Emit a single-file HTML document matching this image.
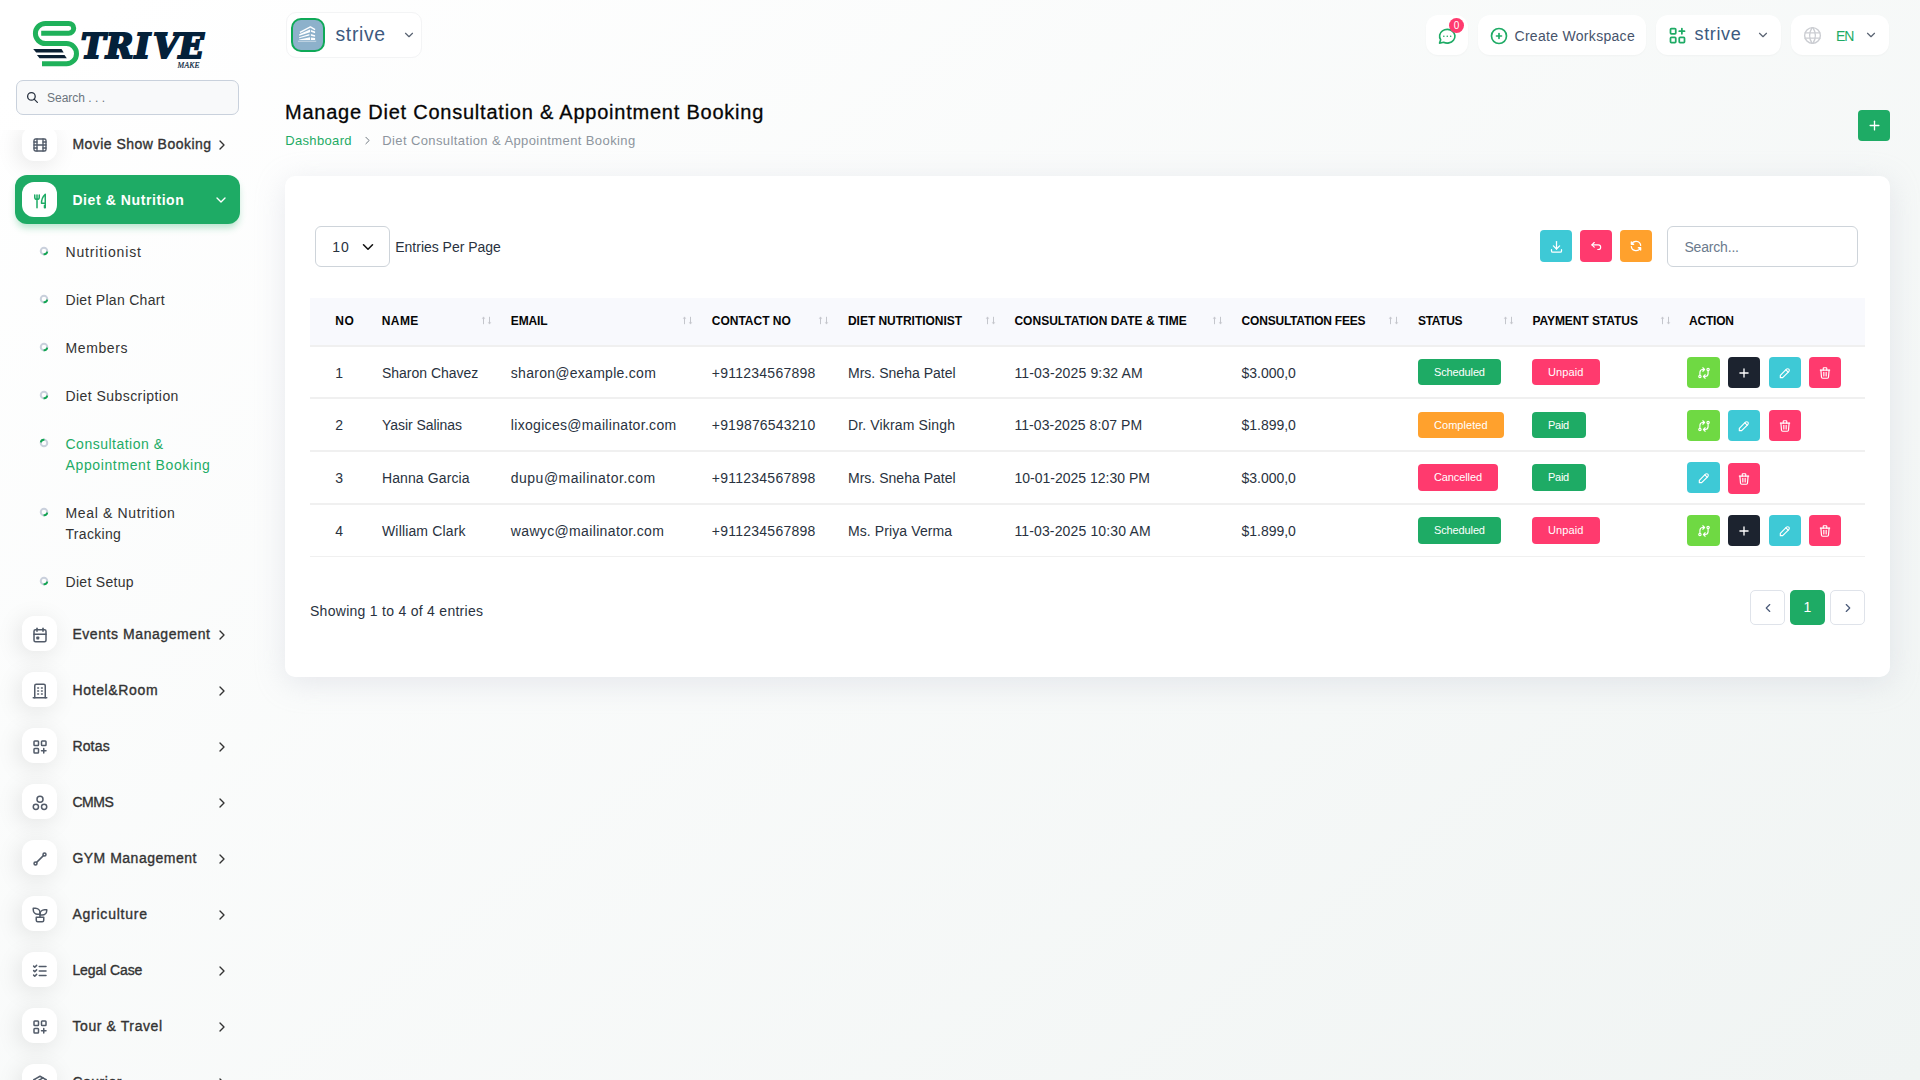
<!DOCTYPE html>
<html lang="en"><head><meta charset="utf-8"><title>Manage Diet Consultation &amp; Appointment Booking</title>
<style>
*{box-sizing:border-box;margin:0;padding:0}
html,body{width:1920px;height:1080px;overflow:hidden}
body{font-family:"Liberation Sans","DejaVu Sans",sans-serif;font-size:14px;color:#293240;
 background:linear-gradient(141.55deg,rgba(240,244,243,0) 3.46%,#f0f4f3 99.86%),#fff;position:relative}
.abs{position:absolute}
.tx{white-space:nowrap;display:inline-block}
svg.ti{display:block}
.micon svg{transform:translateY(1px)}
/* sidebar */
.sb-scroll{position:absolute;left:0;top:130px;width:280px;height:950px;overflow:hidden}
.micon{position:absolute;left:22px;width:35px;height:35px;border-radius:12px;background:#fff;box-shadow:-3px 4px 23px rgba(0,0,0,.1);display:flex;align-items:center;justify-content:center;color:#525b69}
.mtext{position:absolute;left:72.4px;font-size:14px;line-height:20px;color:#333;font-weight:400;-webkit-text-stroke:.35px #333}
.marrow{position:absolute;left:215px;color:#333}
.sub{position:absolute;left:65.5px;font-size:14px;line-height:21px;color:#333}
.sub.act{color:#1eab65}
.bul{position:absolute;left:39.05px}
.active-bg{position:absolute;left:15px;top:45px;width:225px;height:49px;border-radius:12px;background:#1eab65;box-shadow:0 5px 7px -1px rgba(30,171,101,.3)}
/* header */
.pill{position:absolute;background:#fff;border-radius:12px;top:15px;height:40px;box-shadow:0 1px 2px rgba(0,0,0,.03)}
/* card */
.card{position:absolute;left:285px;top:176px;width:1605px;height:501px;background:#fff;border-radius:10px;box-shadow:0 6px 30px rgba(182,186,203,.3)}
.btn{position:absolute;border-radius:4px;display:flex;align-items:center;justify-content:center;color:#fff}
.th{position:absolute;top:-1px;height:48px;line-height:48px;font-size:12px;font-weight:700;color:#060606}
.td{position:absolute;font-size:14px;line-height:20px;color:#293240}
.sort{position:absolute;top:18px}
.badge{position:absolute;height:26px;border-radius:4px;color:#fff;font-size:11px;line-height:27.4px;padding-left:16px}
.rowline{position:absolute;left:0;width:1555px;height:2px;background:#f0f0f0}
</style></head><body>
<svg class="abs" style="left:28px;top:16px" width="190" height="58" viewBox="28 16 190 58" role="img" aria-label="STRIVE MAKE"><title>STRIVE MAKE</title>
<path d="M41.200 33.300H68.750A4.950 4.950 0 0 0 68.750 23.400H45.500A10.100 10.100 0 0 0 45.500 43.600H66.450A10.050 10.050 0 0 1 66.450 63.700H42" fill="none" stroke="#1fb15a" stroke-width="5" stroke-linejoin="round"/>
<path d="M33.200 49h28.300l2.200 3.600h-27.500z" fill="#0b2034"/>
<path d="M36.900 55.100h27.600l2.300 3.100h-27.200z" fill="#0b2034"/>
<text x="80.900 106.100 134.700 153.300 178.700" y="57.600" font-family="'DejaVu Serif','Liberation Serif',serif" font-weight="700" font-style="italic" font-size="32.800" fill="#04213a" stroke="#04213a" stroke-width="2.200">TRIVE</text>
<text x="177.600" y="67.700" font-family="'Liberation Serif',serif" font-weight="400" font-style="italic" font-size="7.800" fill="#04213a" stroke="#04213a" stroke-width=".15" textLength="21.800" lengthAdjust="spacingAndGlyphs">MAKE</text>
</svg>
<div class="abs" style="left:16px;top:80px;width:223px;height:35px;border:1px solid #c9d1dc;border-radius:7px;background:#f8f9fa"></div>
<div class="abs" style="left:26px;top:91px;color:#293240"><svg class="ti" width="13" height="13" viewBox="0 0 24 24" fill="none" stroke="currentColor" stroke-width="2.4" stroke-linecap="round" stroke-linejoin="round" ><circle cx="10" cy="10" r="7"/><path d="M21 21l-6 -6"/></svg></div>
<div class="abs" style="left:47px;top:87.500px;font-size:12px;line-height:20px;color:#6c757d"><span id="t1" class="tx " style="letter-spacing:-0.003px;">Search . . .</span></div>
<nav class="sb-scroll" aria-label="Main menu"><div class="micon" style="top:-4px"><svg class="ti" width="18" height="18" viewBox="0 0 24 24" fill="none" stroke="currentColor" stroke-width="1.8" stroke-linecap="round" stroke-linejoin="round" ><path d="M4 6a2 2 0 0 1 2 -2h12a2 2 0 0 1 2 2v12a2 2 0 0 1 -2 2h-12a2 2 0 0 1 -2 -2z"/><path d="M8 4v16"/><path d="M16 4v16"/><path d="M4 8h4"/><path d="M4 16h4"/><path d="M4 12h16"/><path d="M16 8h4"/><path d="M16 16h4"/></svg></div><div class="mtext" style="top:3.5px"><span id="t2" class="tx " style="letter-spacing:0.462px;">Movie Show Booking</span></div><div class="marrow" style="top:6.5px;left:214px"><svg class="ti" width="16" height="16" viewBox="0 0 24 24" fill="none" stroke="currentColor" stroke-width="2" stroke-linecap="round" stroke-linejoin="round" ><path d="M9 6l6 6l-6 6"/></svg></div><div class="active-bg" style="top:45px"></div><div class="micon" style="top:52px;color:#1eab65;box-shadow:none"><svg class="ti" width="18" height="18" viewBox="0 0 24 24" fill="none" stroke="currentColor" stroke-width="2" stroke-linecap="round" stroke-linejoin="round" ><path d="M19 3v12h-5c-.023 -3.681 .184 -7.406 5 -12zm0 12v6h-1v-3m-10 -14v17m-3 -17v3a3 3 0 1 0 6 0v-3"/></svg></div><div class="mtext" style="top:59.5px;color:#fff;font-weight:700;-webkit-text-stroke:0"><span id="t3" class="tx " style="letter-spacing:0.583px;">Diet &amp; Nutrition</span></div><div class="marrow" style="top:61.5px;left:212.500px;color:#fff"><svg class="ti" width="16" height="16" viewBox="0 0 24 24" fill="none" stroke="currentColor" stroke-width="2" stroke-linecap="round" stroke-linejoin="round" ><path d="M6 9l6 6l6 -6"/></svg></div><svg class="bul" style="top:115.90px" width="10" height="10" viewBox="0 0 10 10"><g transform="rotate(0 5 5)" fill="none" stroke-width="2"><circle cx="5" cy="5" r="3.250" stroke="#c9d0dc"/><path d="M8.200 5.600A3.250 3.250 0 0 1 4.600 8.230" stroke="#12a552"/></g></svg><div class="sub" style="top:111.5px"><span id="t4" class="tx " style="letter-spacing:0.842px;">Nutritionist</span></div><svg class="bul" style="top:163.90px" width="10" height="10" viewBox="0 0 10 10"><g transform="rotate(0 5 5)" fill="none" stroke-width="2"><circle cx="5" cy="5" r="3.250" stroke="#c9d0dc"/><path d="M8.200 5.600A3.250 3.250 0 0 1 4.600 8.230" stroke="#12a552"/></g></svg><div class="sub" style="top:159.5px"><span id="t5" class="tx " style="letter-spacing:0.297px;">Diet Plan Chart</span></div><svg class="bul" style="top:211.90px" width="10" height="10" viewBox="0 0 10 10"><g transform="rotate(0 5 5)" fill="none" stroke-width="2"><circle cx="5" cy="5" r="3.250" stroke="#c9d0dc"/><path d="M8.200 5.600A3.250 3.250 0 0 1 4.600 8.230" stroke="#12a552"/></g></svg><div class="sub" style="top:207.5px"><span id="t6" class="tx " style="letter-spacing:0.590px;">Members</span></div><svg class="bul" style="top:259.90px" width="10" height="10" viewBox="0 0 10 10"><g transform="rotate(0 5 5)" fill="none" stroke-width="2"><circle cx="5" cy="5" r="3.250" stroke="#c9d0dc"/><path d="M8.200 5.600A3.250 3.250 0 0 1 4.600 8.230" stroke="#12a552"/></g></svg><div class="sub" style="top:255.5px"><span id="t7" class="tx " style="letter-spacing:0.442px;">Diet Subscription</span></div><svg class="bul" style="top:307.90px" width="10" height="10" viewBox="0 0 10 10"><g transform="rotate(180 5 5)" fill="none" stroke-width="2"><circle cx="5" cy="5" r="3.250" stroke="#c9d0dc"/><path d="M8.200 5.600A3.250 3.250 0 0 1 4.600 8.230" stroke="#12a552"/></g></svg><div class="sub act" style="top:303.5px"><span id="t8" class="tx " style="letter-spacing:0.495px;">Consultation &amp;</span></div><div class="sub act" style="top:324.5px"><span id="t9" class="tx " style="letter-spacing:0.628px;">Appointment Booking</span></div><svg class="bul" style="top:376.90px" width="10" height="10" viewBox="0 0 10 10"><g transform="rotate(0 5 5)" fill="none" stroke-width="2"><circle cx="5" cy="5" r="3.250" stroke="#c9d0dc"/><path d="M8.200 5.600A3.250 3.250 0 0 1 4.600 8.230" stroke="#12a552"/></g></svg><div class="sub" style="top:372.5px"><span id="t10" class="tx " style="letter-spacing:0.654px;">Meal &amp; Nutrition</span></div><div class="sub" style="top:393.5px"><span id="t11" class="tx " style="letter-spacing:0.318px;">Tracking</span></div><svg class="bul" style="top:445.90px" width="10" height="10" viewBox="0 0 10 10"><g transform="rotate(0 5 5)" fill="none" stroke-width="2"><circle cx="5" cy="5" r="3.250" stroke="#c9d0dc"/><path d="M8.200 5.600A3.250 3.250 0 0 1 4.600 8.230" stroke="#12a552"/></g></svg><div class="sub" style="top:441.5px"><span id="t12" class="tx " style="letter-spacing:0.303px;">Diet Setup</span></div><div class="micon" style="top:486px"><svg class="ti" width="18" height="18" viewBox="0 0 24 24" fill="none" stroke="currentColor" stroke-width="2" stroke-linecap="round" stroke-linejoin="round" ><path d="M4 7a2 2 0 0 1 2 -2h12a2 2 0 0 1 2 2v12a2 2 0 0 1 -2 2h-12a2 2 0 0 1 -2 -2z"/><path d="M16 3v4"/><path d="M8 3v4"/><path d="M4 11h16"/><path d="M8 15h2v2h-2z"/></svg></div><div class="mtext" style="top:493.5px"><span id="t13" class="tx " style="letter-spacing:0.568px;">Events Management</span></div><div class="marrow" style="top:496.5px;left:214px"><svg class="ti" width="16" height="16" viewBox="0 0 24 24" fill="none" stroke="currentColor" stroke-width="2" stroke-linecap="round" stroke-linejoin="round" ><path d="M9 6l6 6l-6 6"/></svg></div><div class="micon" style="top:542px"><svg class="ti" width="18" height="18" viewBox="0 0 24 24" fill="none" stroke="currentColor" stroke-width="2" stroke-linecap="round" stroke-linejoin="round" ><path d="M3 21h18"/><path d="M9 8h1"/><path d="M9 12h1"/><path d="M9 16h1"/><path d="M14 8h1"/><path d="M14 12h1"/><path d="M14 16h1"/><path d="M5 21v-16a2 2 0 0 1 2 -2h10a2 2 0 0 1 2 2v16"/></svg></div><div class="mtext" style="top:549.5px"><span id="t14" class="tx " style="letter-spacing:0.653px;">Hotel&amp;Room</span></div><div class="marrow" style="top:552.5px;left:214px"><svg class="ti" width="16" height="16" viewBox="0 0 24 24" fill="none" stroke="currentColor" stroke-width="2" stroke-linecap="round" stroke-linejoin="round" ><path d="M9 6l6 6l-6 6"/></svg></div><div class="micon" style="top:598px"><svg class="ti" width="18" height="18" viewBox="0 0 24 24" fill="none" stroke="currentColor" stroke-width="2" stroke-linecap="round" stroke-linejoin="round" ><path d="M4 5a1 1 0 0 1 1 -1h4a1 1 0 0 1 1 1v4a1 1 0 0 1 -1 1h-4a1 1 0 0 1 -1 -1z"/><path d="M14 5a1 1 0 0 1 1 -1h4a1 1 0 0 1 1 1v4a1 1 0 0 1 -1 1h-4a1 1 0 0 1 -1 -1z"/><path d="M4 15a1 1 0 0 1 1 -1h4a1 1 0 0 1 1 1v4a1 1 0 0 1 -1 1h-4a1 1 0 0 1 -1 -1z"/><path d="M14 17h6m-3 -3v6"/></svg></div><div class="mtext" style="top:605.5px"><span id="t15" class="tx " style="letter-spacing:0.168px;">Rotas</span></div><div class="marrow" style="top:608.5px;left:214px"><svg class="ti" width="16" height="16" viewBox="0 0 24 24" fill="none" stroke="currentColor" stroke-width="2" stroke-linecap="round" stroke-linejoin="round" ><path d="M9 6l6 6l-6 6"/></svg></div><div class="micon" style="top:654px"><svg class="ti" width="18" height="18" viewBox="0 0 24 24" fill="none" stroke="currentColor" stroke-width="2" stroke-linecap="round" stroke-linejoin="round" ><circle cx="12" cy="7" r="4"/><circle cx="6.5" cy="17" r="3.5"/><circle cx="17.5" cy="17" r="3.5"/></svg></div><div class="mtext" style="top:661.5px"><span id="t16" class="tx " style="letter-spacing:-0.427px;">CMMS</span></div><div class="marrow" style="top:664.5px;left:214px"><svg class="ti" width="16" height="16" viewBox="0 0 24 24" fill="none" stroke="currentColor" stroke-width="2" stroke-linecap="round" stroke-linejoin="round" ><path d="M9 6l6 6l-6 6"/></svg></div><div class="micon" style="top:710px"><svg class="ti" width="18" height="18" viewBox="0 0 24 24" fill="none" stroke="currentColor" stroke-width="2" stroke-linecap="round" stroke-linejoin="round" ><circle cx="6" cy="18" r="2"/><circle cx="18" cy="6" r="2"/><path d="M7.5 16.5l9 -9"/></svg></div><div class="mtext" style="top:717.5px"><span id="t17" class="tx " style="letter-spacing:0.500px;">GYM Management</span></div><div class="marrow" style="top:720.5px;left:214px"><svg class="ti" width="16" height="16" viewBox="0 0 24 24" fill="none" stroke="currentColor" stroke-width="2" stroke-linecap="round" stroke-linejoin="round" ><path d="M9 6l6 6l-6 6"/></svg></div><div class="micon" style="top:766px"><svg class="ti" width="18" height="18" viewBox="0 0 24 24" fill="none" stroke="currentColor" stroke-width="2" stroke-linecap="round" stroke-linejoin="round" ><path d="M7 15h10v4a2 2 0 0 1 -2 2h-6a2 2 0 0 1 -2 -2v-4z"/><path d="M12 9a6 6 0 0 0 -6 -6h-3v2a6 6 0 0 0 6 6h3"/><path d="M12 11a6 6 0 0 1 6 -6h3v1a6 6 0 0 1 -6 6h-3"/><path d="M12 15v-6"/></svg></div><div class="mtext" style="top:773.5px"><span id="t18" class="tx " style="letter-spacing:0.768px;">Agriculture</span></div><div class="marrow" style="top:776.5px;left:214px"><svg class="ti" width="16" height="16" viewBox="0 0 24 24" fill="none" stroke="currentColor" stroke-width="2" stroke-linecap="round" stroke-linejoin="round" ><path d="M9 6l6 6l-6 6"/></svg></div><div class="micon" style="top:822px"><svg class="ti" width="18" height="18" viewBox="0 0 24 24" fill="none" stroke="currentColor" stroke-width="2" stroke-linecap="round" stroke-linejoin="round" ><path d="M3.5 5.500l1.500 1.500l2.500 -2.500"/><path d="M3.500 11.500l1.500 1.500l2.500 -2.500"/><path d="M3.500 17.500l1.500 1.500l2.500 -2.500"/><path d="M11 6h9"/><path d="M11 12h9"/><path d="M11 18h9"/></svg></div><div class="mtext" style="top:829.5px"><span id="t19" class="tx " style="letter-spacing:-0.092px;">Legal Case</span></div><div class="marrow" style="top:832.5px;left:214px"><svg class="ti" width="16" height="16" viewBox="0 0 24 24" fill="none" stroke="currentColor" stroke-width="2" stroke-linecap="round" stroke-linejoin="round" ><path d="M9 6l6 6l-6 6"/></svg></div><div class="micon" style="top:878px"><svg class="ti" width="18" height="18" viewBox="0 0 24 24" fill="none" stroke="currentColor" stroke-width="2" stroke-linecap="round" stroke-linejoin="round" ><path d="M4 5a1 1 0 0 1 1 -1h4a1 1 0 0 1 1 1v4a1 1 0 0 1 -1 1h-4a1 1 0 0 1 -1 -1z"/><path d="M14 5a1 1 0 0 1 1 -1h4a1 1 0 0 1 1 1v4a1 1 0 0 1 -1 1h-4a1 1 0 0 1 -1 -1z"/><path d="M4 15a1 1 0 0 1 1 -1h4a1 1 0 0 1 1 1v4a1 1 0 0 1 -1 1h-4a1 1 0 0 1 -1 -1z"/><path d="M14 17h6m-3 -3v6"/></svg></div><div class="mtext" style="top:885.5px"><span id="t20" class="tx " style="letter-spacing:0.605px;">Tour &amp; Travel</span></div><div class="marrow" style="top:888.5px;left:214px"><svg class="ti" width="16" height="16" viewBox="0 0 24 24" fill="none" stroke="currentColor" stroke-width="2" stroke-linecap="round" stroke-linejoin="round" ><path d="M9 6l6 6l-6 6"/></svg></div><div class="micon" style="top:934px"><svg class="ti" width="18" height="18" viewBox="0 0 24 24" fill="none" stroke="currentColor" stroke-width="2" stroke-linecap="round" stroke-linejoin="round" ><path d="M12 3l8 4.500v9l-8 4.500l-8 -4.500v-9l8 -4.500"/><path d="M12 12l8 -4.500"/><path d="M12 12v9"/><path d="M12 12l-8 -4.500"/><path d="M16 5.250l-8 4.500"/></svg></div><div class="mtext" style="top:941.5px"><span id="t21" class="tx " style="letter-spacing:0.516px;">Courier</span></div><div class="marrow" style="top:944.5px;left:214px"><svg class="ti" width="16" height="16" viewBox="0 0 24 24" fill="none" stroke="currentColor" stroke-width="2" stroke-linecap="round" stroke-linejoin="round" ><path d="M9 6l6 6l-6 6"/></svg></div></nav><div class="abs" style="left:285.500px;top:12px;width:136px;height:46px;border-radius:10px;background:#fff;border:1px solid #f3f4f5"></div>
<div class="abs" style="left:291px;top:18px;width:34px;height:34px;border-radius:10px;border:2px solid #0fa958;background:#8db1cb;overflow:hidden">
<svg width="30" height="30" viewBox="0 0 30 30"><path d="M6.20 14.30L17.00 9.60L17.00 12.20L6.20 15.80zM6.10 17.20L16.40 14.00L16.40 15.60L6.10 18.25zM6.40 19.50L17.00 17.20L17.00 20.10L6.00 20.10zM17.90 9.90L22.10 11.50L22.10 13.20L17.90 11.70zM17.90 14.00L22.10 15.20L22.10 16.80L17.90 15.80zM17.90 17.40L22.10 18.05L22.10 20.10L17.90 20.10z" fill="#fdfeff"/><path d="M6.90 12.30L17.40 6.90L22.10 9.60" fill="none" stroke="#fdfeff" stroke-width="1.300" stroke-linejoin="round"/><path d="M5 20.700h18.200v1h-18.200z" fill="#fdfeff" opacity=".55"/></svg></div>
<div class="abs" style="left:335.500px;top:21.300px;font-size:19.400px;line-height:26px;color:#3d5a80"><span id="t22" class="tx " style="letter-spacing:0.654px;">strive</span></div>
<div class="abs" style="left:401.800px;top:28.300px;color:#596372"><svg class="ti" width="14" height="14" viewBox="0 0 24 24" fill="none" stroke="currentColor" stroke-width="2" stroke-linecap="round" stroke-linejoin="round" ><path d="M6 9l6 6l6 -6"/></svg></div>
<div class="pill" style="left:1426px;width:42px"></div>
<div class="abs" style="left:1437px;top:26.100px;color:#1eab65"><svg class="ti" width="20.5" height="20.5" viewBox="0 0 24 24" fill="none" stroke="currentColor" stroke-width="1.9" stroke-linecap="round" stroke-linejoin="round" ><path d="M3 20l1.300 -3.900c-2.324 -3.437 -1.426 -7.872 2.100 -10.374c3.526 -2.501 8.590 -2.296 11.845 .480c3.255 2.777 3.695 7.266 1.029 10.501c-2.666 3.235 -7.615 4.215 -11.574 2.293l-4.700 1"/><path d="M8 12v.01"/><path d="M12 12v.01"/><path d="M16 12v.01"/></svg></div>
<div class="abs" style="left:1449px;top:17.900px;width:15px;height:15px;border-radius:50%;background:#ff3a6e;color:#fff;font-size:10px;line-height:15px;text-align:center">0</div>
<div class="pill" style="left:1478px;width:168px"></div>
<div class="abs" style="left:1489.250px;top:26px;color:#1eab65"><svg class="ti" width="20" height="20" viewBox="0 0 24 24" fill="none" stroke="currentColor" stroke-width="2" stroke-linecap="round" stroke-linejoin="round" ><circle cx="12" cy="12" r="9"/><path d="M9 12h6"/><path d="M12 9v6"/></svg></div>
<div class="abs" style="left:1514.500px;top:25.500px;font-size:14px;line-height:20px;color:#46536b"><span id="t23" class="tx " style="letter-spacing:0.301px;">Create Workspace</span></div>
<div class="pill" style="left:1656px;width:125px"></div>
<div class="abs" style="left:1666.800px;top:25.400px;color:#1eab65"><svg class="ti" width="21" height="21" viewBox="0 0 24 24" fill="none" stroke="currentColor" stroke-width="2" stroke-linecap="round" stroke-linejoin="round" ><path d="M4 5a1 1 0 0 1 1 -1h4a1 1 0 0 1 1 1v4a1 1 0 0 1 -1 1h-4a1 1 0 0 1 -1 -1z"/><path d="M4 15a1 1 0 0 1 1 -1h4a1 1 0 0 1 1 1v4a1 1 0 0 1 -1 1h-4a1 1 0 0 1 -1 -1z"/><path d="M14 15a1 1 0 0 1 1 -1h4a1 1 0 0 1 1 1v4a1 1 0 0 1 -1 1h-4a1 1 0 0 1 -1 -1z"/><path d="M14 7h6m-3 -3v6"/></svg></div>
<div class="abs" style="left:1694.500px;top:21.400px;font-size:18px;line-height:26px;color:#3d5a80"><span id="t24" class="tx " style="letter-spacing:0.637px;">strive</span></div>
<div class="abs" style="left:1755.900px;top:28.300px;color:#596372"><svg class="ti" width="14" height="14" viewBox="0 0 24 24" fill="none" stroke="currentColor" stroke-width="2" stroke-linecap="round" stroke-linejoin="round" ><path d="M6 9l6 6l6 -6"/></svg></div>
<div class="pill" style="left:1791px;width:98px"></div>
<div class="abs" style="left:1801.700px;top:24.900px;color:#cbcdd2"><svg class="ti" width="21" height="21" viewBox="0 0 24 24" fill="none" stroke="currentColor" stroke-width="1.6" stroke-linecap="round" stroke-linejoin="round" ><circle cx="12" cy="12" r="9"/><path d="M3.600 9h16.800"/><path d="M3.600 15h16.800"/><path d="M11.500 3a17 17 0 0 0 0 18"/><path d="M12.500 3a17 17 0 0 1 0 18"/></svg></div>
<div class="abs" style="left:1836px;top:25.800px;font-size:14px;line-height:20px;color:#1eab65"><span id="t25" class="tx " style="letter-spacing:-1.053px;">EN</span></div>
<div class="abs" style="left:1864px;top:28.300px;color:#596372"><svg class="ti" width="14" height="14" viewBox="0 0 24 24" fill="none" stroke="currentColor" stroke-width="2" stroke-linecap="round" stroke-linejoin="round" ><path d="M6 9l6 6l6 -6"/></svg></div>
<h4 class="abs" style="left:285px;top:98px;font-size:20px;line-height:28px;color:#060606;font-weight:400;-webkit-text-stroke:.3px #060606"><span id="t26" class="tx " style="letter-spacing:0.771px;">Manage Diet Consultation &amp; Appointment Booking</span></h4>
<div class="abs" style="left:285.200px;top:131px;font-size:13px;line-height:19px;color:#1eab65"><span id="t27" class="tx " style="letter-spacing:0.349px;">Dashboard</span></div>
<div class="abs" style="left:360.500px;top:134px;color:#6c757d"><svg class="ti" width="13" height="13" viewBox="0 0 24 24" fill="none" stroke="currentColor" stroke-width="1.8" stroke-linecap="round" stroke-linejoin="round" ><path d="M9 6l6 6l-6 6"/></svg></div>
<div class="abs" style="left:382.200px;top:131px;font-size:13px;line-height:19px;color:#8d959e"><span id="t28" class="tx " style="letter-spacing:0.401px;">Diet Consultation &amp; Appointment Booking</span></div>
<div class="btn" style="left:1858px;top:110px;width:32px;height:31px;background:#1eab65"><svg class="ti" width="15" height="15" viewBox="0 0 24 24" fill="none" stroke="currentColor" stroke-width="2.1" stroke-linecap="round" stroke-linejoin="round" ><path d="M12 5v14"/><path d="M5 12h14"/></svg></div>
<main class="card"><div class="abs" style="left:30px;top:50px;width:75px;height:41px;border:1px solid #ced4da;border-radius:6px;background:#fff"></div>
<div class="abs" style="left:47.30000000000001px;top:60.5px;font-size:14px;line-height:20px;color:#293240"><span id="t29" class="tx " style="letter-spacing:0.822px;">10</span></div>
<div class="abs" style="left:74px;top:62px;color:#111"><svg class="ti" width="18" height="18" viewBox="0 0 24 24" fill="none" stroke="currentColor" stroke-width="2.1" stroke-linecap="round" stroke-linejoin="round" ><path d="M6 9l6 6l6 -6"/></svg></div>
<div class="abs" style="left:110.30000000000001px;top:60.5px;font-size:14px;line-height:20px;color:#293240"><span id="t30" class="tx " style="letter-spacing:-0.023px;">Entries Per Page</span></div>
<div class="btn" style="left:1255px;top:54px;width:32px;height:32px;background:#3ec9d6"><svg class="ti" width="15" height="15" viewBox="0 0 24 24" fill="none" stroke="currentColor" stroke-width="2" stroke-linecap="round" stroke-linejoin="round" ><path d="M4 17v2a2 2 0 0 0 2 2h12a2 2 0 0 0 2 -2v-2"/><path d="M7 11l5 5l5 -5"/><path d="M12 4v12"/></svg></div>
<div class="btn" style="left:1295px;top:54px;width:32px;height:32px;background:#ff3a6e"><svg class="ti" width="14" height="14" viewBox="0 0 24 24" fill="none" stroke="currentColor" stroke-width="2" stroke-linecap="round" stroke-linejoin="round" ><path d="M9 14l-4 -4l4 -4"/><path d="M5 10h11a4 4 0 1 1 0 8h-1"/></svg></div>
<div class="btn" style="left:1335px;top:54px;width:32px;height:32px;background:#ffa12d"><svg class="ti" width="14" height="14" viewBox="0 0 24 24" fill="none" stroke="currentColor" stroke-width="2.2" stroke-linecap="round" stroke-linejoin="round" ><path d="M20 11a8.100 8.100 0 0 0 -15.500 -2m-.500 -4v4h4"/><path d="M4 13a8.100 8.100 0 0 0 15.500 2m.500 4v-4h-4"/></svg></div>
<div class="abs" style="left:1382px;top:50px;width:191px;height:41px;border:1px solid #ced4da;border-radius:6px;background:#fff"></div>
<div class="abs" style="left:1399.4px;top:60.5px;font-size:14px;line-height:20px;color:#6b7a8d"><span id="t31" class="tx " style="letter-spacing:-0.179px;">Search...</span></div>
<div class="abs" style="left:25px;top:122px;width:1555px;height:260px"><div class="abs" style="left:0;top:0;width:1555px;height:47px;background:#f8f9fd"></div><div class="th" style="left:25.30000000000001px"><span id="t32" class="tx " style="letter-spacing:0.500px;">NO</span></div><div class="th" style="left:71.80000000000001px"><span id="t33" class="tx " style="letter-spacing:0.385px;">NAME</span></div><svg class="sort" style="left:171px" width="11" height="9" viewBox="0 0 11 9"><g fill="#c4c6cc" stroke="#c4c6cc" stroke-width="1"><path d="M2.500 2v6.200" fill="none"/><path d="M2.500 .800l1.400 1.800h-2.800z" stroke-width=".3"/><path d="M8.500 .800v6.200" fill="none"/><path d="M8.500 8.200l1.400 -1.800h-2.800z" stroke-width=".3"/></g></svg><div class="th" style="left:200.8px"><span id="t34" class="tx " style="letter-spacing:-0.136px;">EMAIL</span></div><svg class="sort" style="left:372px" width="11" height="9" viewBox="0 0 11 9"><g fill="#c4c6cc" stroke="#c4c6cc" stroke-width="1"><path d="M2.500 2v6.200" fill="none"/><path d="M2.500 .800l1.400 1.800h-2.800z" stroke-width=".3"/><path d="M8.500 .800v6.200" fill="none"/><path d="M8.500 8.200l1.400 -1.800h-2.800z" stroke-width=".3"/></g></svg><div class="th" style="left:401.79999999999995px"><span id="t35" class="tx " style="letter-spacing:-0.012px;">CONTACT NO</span></div><svg class="sort" style="left:508px" width="11" height="9" viewBox="0 0 11 9"><g fill="#c4c6cc" stroke="#c4c6cc" stroke-width="1"><path d="M2.500 2v6.200" fill="none"/><path d="M2.500 .800l1.400 1.800h-2.800z" stroke-width=".3"/><path d="M8.500 .800v6.200" fill="none"/><path d="M8.500 8.200l1.400 -1.800h-2.800z" stroke-width=".3"/></g></svg><div class="th" style="left:538px"><span id="t36" class="tx " style="letter-spacing:-0.042px;">DIET NUTRITIONIST</span></div><svg class="sort" style="left:675px" width="11" height="9" viewBox="0 0 11 9"><g fill="#c4c6cc" stroke="#c4c6cc" stroke-width="1"><path d="M2.500 2v6.200" fill="none"/><path d="M2.500 .800l1.400 1.800h-2.800z" stroke-width=".3"/><path d="M8.500 .800v6.200" fill="none"/><path d="M8.500 8.200l1.400 -1.800h-2.800z" stroke-width=".3"/></g></svg><div class="th" style="left:704.4px"><span id="t37" class="tx " style="letter-spacing:0.023px;">CONSULTATION DATE &amp; TIME</span></div><svg class="sort" style="left:902px" width="11" height="9" viewBox="0 0 11 9"><g fill="#c4c6cc" stroke="#c4c6cc" stroke-width="1"><path d="M2.500 2v6.200" fill="none"/><path d="M2.500 .800l1.400 1.800h-2.800z" stroke-width=".3"/><path d="M8.500 .800v6.200" fill="none"/><path d="M8.500 8.200l1.400 -1.800h-2.800z" stroke-width=".3"/></g></svg><div class="th" style="left:931.5999999999999px"><span id="t38" class="tx " style="letter-spacing:-0.209px;">CONSULTATION FEES</span></div><svg class="sort" style="left:1078px" width="11" height="9" viewBox="0 0 11 9"><g fill="#c4c6cc" stroke="#c4c6cc" stroke-width="1"><path d="M2.500 2v6.200" fill="none"/><path d="M2.500 .800l1.400 1.800h-2.800z" stroke-width=".3"/><path d="M8.500 .800v6.200" fill="none"/><path d="M8.500 8.200l1.400 -1.800h-2.800z" stroke-width=".3"/></g></svg><div class="th" style="left:1108px"><span id="t39" class="tx " style="letter-spacing:-0.344px;">STATUS</span></div><svg class="sort" style="left:1193px" width="11" height="9" viewBox="0 0 11 9"><g fill="#c4c6cc" stroke="#c4c6cc" stroke-width="1"><path d="M2.500 2v6.200" fill="none"/><path d="M2.500 .800l1.400 1.800h-2.800z" stroke-width=".3"/><path d="M8.500 .800v6.200" fill="none"/><path d="M8.500 8.200l1.400 -1.800h-2.800z" stroke-width=".3"/></g></svg><div class="th" style="left:1222.4px"><span id="t40" class="tx " style="letter-spacing:-0.049px;">PAYMENT STATUS</span></div><svg class="sort" style="left:1350px" width="11" height="9" viewBox="0 0 11 9"><g fill="#c4c6cc" stroke="#c4c6cc" stroke-width="1"><path d="M2.500 2v6.200" fill="none"/><path d="M2.500 .800l1.400 1.800h-2.800z" stroke-width=".3"/><path d="M8.500 .800v6.200" fill="none"/><path d="M8.500 8.200l1.400 -1.800h-2.800z" stroke-width=".3"/></g></svg><div class="th" style="left:1379px"><span id="t41" class="tx " style="letter-spacing:-0.200px;">ACTION</span></div><div class="rowline" style="top:47px;height:2px"></div><div class="rowline" style="top:99px;height:2px"></div><div class="rowline" style="top:152px;height:2px"></div><div class="rowline" style="top:205px;height:2px"></div><div class="rowline" style="top:258px;height:1px"></div><div class="td" style="left:25.3px;top:65.0px"><span id="t42" class="tx " style="letter-spacing:0.000px;">1</span></div><div class="td" style="left:72.0px;top:65.0px"><span id="t43" class="tx " style="letter-spacing:-0.018px;">Sharon Chavez</span></div><div class="td" style="left:200.8px;top:65.0px"><span id="t44" class="tx " style="letter-spacing:0.278px;">sharon@example.com</span></div><div class="td" style="left:401.8px;top:65.0px"><span id="t45" class="tx " style="letter-spacing:0.243px;">+911234567898</span></div><div class="td" style="left:538.0px;top:65.0px"><span id="t46" class="tx " style="letter-spacing:0.014px;">Mrs. Sneha Patel</span></div><div class="td" style="left:704.4px;top:65.0px"><span id="t47" class="tx " style="letter-spacing:0.144px;">11-03-2025 9:32 AM</span></div><div class="td" style="left:931.6px;top:65.0px"><span id="t48" class="tx " style="letter-spacing:-0.029px;">$3.000,0</span></div><div class="badge" style="left:1108px;top:61px;height:26px;width:83px;background:#1eab65"><span id="t49" class="tx " style="letter-spacing:-0.125px;">Scheduled</span></div><div class="badge" style="left:1222px;top:61px;height:26px;width:68px;background:#ff3a6e"><span id="t50" class="tx " style="letter-spacing:0.108px;">Unpaid</span></div><div class="btn" style="left:1377px;top:59px;width:33px;height:31px;background:#6fd943"><svg class="ti" width="14" height="14" viewBox="0 0 24 24" fill="none" stroke="currentColor" stroke-width="2" stroke-linecap="round" stroke-linejoin="round" ><circle cx="5" cy="18" r="2"/><circle cx="19" cy="6" r="2"/><path d="M19 8v5a5 5 0 0 1 -5 5h-3l3 -3m0 6l-3 -3"/><path d="M5 16v-5a5 5 0 0 1 5 -5h3l-3 -3m0 6l3 -3"/></svg></div><div class="btn" style="left:1418px;top:59px;width:32px;height:31px;background:#1c232f"><svg class="ti" width="14" height="14" viewBox="0 0 24 24" fill="none" stroke="currentColor" stroke-width="2.3" stroke-linecap="round" stroke-linejoin="round" ><path d="M12 5v14"/><path d="M5 12h14"/></svg></div><div class="btn" style="left:1459px;top:59px;width:32px;height:31px;background:#3ec9d6"><svg class="ti" width="14" height="14" viewBox="0 0 24 24" fill="none" stroke="currentColor" stroke-width="2" stroke-linecap="round" stroke-linejoin="round" ><path d="M4 20h4l10.500 -10.500a2.828 2.828 0 1 0 -4 -4l-10.500 10.500v4"/><path d="M13.500 6.500l4 4"/></svg></div><div class="btn" style="left:1499px;top:59px;width:32px;height:31px;background:#ff3a6e"><svg class="ti" width="14" height="14" viewBox="0 0 24 24" fill="none" stroke="currentColor" stroke-width="2" stroke-linecap="round" stroke-linejoin="round" ><path d="M4 7h16"/><path d="M10 11v6"/><path d="M14 11v6"/><path d="M5 7l1 12a2 2 0 0 0 2 2h8a2 2 0 0 0 2 -2l1 -12"/><path d="M9 7v-3a1 1 0 0 1 1 -1h4a1 1 0 0 1 1 1v3"/></svg></div><div class="td" style="left:25.3px;top:117.0px"><span id="t51" class="tx " style="letter-spacing:0.000px;">2</span></div><div class="td" style="left:72.0px;top:117.0px"><span id="t52" class="tx " style="letter-spacing:-0.056px;">Yasir Salinas</span></div><div class="td" style="left:200.8px;top:117.0px"><span id="t53" class="tx " style="letter-spacing:0.315px;">lixogices@mailinator.com</span></div><div class="td" style="left:401.8px;top:117.0px"><span id="t54" class="tx " style="letter-spacing:0.158px;">+919876543210</span></div><div class="td" style="left:538.0px;top:117.0px"><span id="t55" class="tx " style="letter-spacing:0.148px;">Dr. Vikram Singh</span></div><div class="td" style="left:704.4px;top:117.0px"><span id="t56" class="tx " style="letter-spacing:0.070px;">11-03-2025 8:07 PM</span></div><div class="td" style="left:931.6px;top:117.0px"><span id="t57" class="tx " style="letter-spacing:-0.029px;">$1.899,0</span></div><div class="badge" style="left:1108px;top:114px;height:26px;width:86px;background:#ffa12d"><span id="t58" class="tx " style="letter-spacing:0.050px;">Completed</span></div><div class="badge" style="left:1222px;top:114px;height:26px;width:54px;background:#1eab65"><span id="t59" class="tx " style="letter-spacing:-0.277px;">Paid</span></div><div class="btn" style="left:1377px;top:112px;width:33px;height:31px;background:#6fd943"><svg class="ti" width="14" height="14" viewBox="0 0 24 24" fill="none" stroke="currentColor" stroke-width="2" stroke-linecap="round" stroke-linejoin="round" ><circle cx="5" cy="18" r="2"/><circle cx="19" cy="6" r="2"/><path d="M19 8v5a5 5 0 0 1 -5 5h-3l3 -3m0 6l-3 -3"/><path d="M5 16v-5a5 5 0 0 1 5 -5h3l-3 -3m0 6l3 -3"/></svg></div><div class="btn" style="left:1418px;top:112px;width:32px;height:31px;background:#3ec9d6"><svg class="ti" width="14" height="14" viewBox="0 0 24 24" fill="none" stroke="currentColor" stroke-width="2" stroke-linecap="round" stroke-linejoin="round" ><path d="M4 20h4l10.500 -10.500a2.828 2.828 0 1 0 -4 -4l-10.500 10.500v4"/><path d="M13.500 6.500l4 4"/></svg></div><div class="btn" style="left:1459px;top:112px;width:32px;height:31px;background:#ff3a6e"><svg class="ti" width="14" height="14" viewBox="0 0 24 24" fill="none" stroke="currentColor" stroke-width="2" stroke-linecap="round" stroke-linejoin="round" ><path d="M4 7h16"/><path d="M10 11v6"/><path d="M14 11v6"/><path d="M5 7l1 12a2 2 0 0 0 2 2h8a2 2 0 0 0 2 -2l1 -12"/><path d="M9 7v-3a1 1 0 0 1 1 -1h4a1 1 0 0 1 1 1v3"/></svg></div><div class="td" style="left:25.3px;top:170.0px"><span id="t60" class="tx " style="letter-spacing:0.000px;">3</span></div><div class="td" style="left:72.0px;top:170.0px"><span id="t61" class="tx " style="letter-spacing:0.101px;">Hanna Garcia</span></div><div class="td" style="left:200.8px;top:170.0px"><span id="t62" class="tx " style="letter-spacing:0.488px;">dupu@mailinator.com</span></div><div class="td" style="left:401.8px;top:170.0px"><span id="t63" class="tx " style="letter-spacing:0.243px;">+911234567898</span></div><div class="td" style="left:538.0px;top:170.0px"><span id="t64" class="tx " style="letter-spacing:0.014px;">Mrs. Sneha Patel</span></div><div class="td" style="left:704.4px;top:170.0px"><span id="t65" class="tx " style="letter-spacing:0.009px;">10-01-2025 12:30 PM</span></div><div class="td" style="left:931.6px;top:170.0px"><span id="t66" class="tx " style="letter-spacing:-0.029px;">$3.000,0</span></div><div class="badge" style="left:1108px;top:166px;height:27px;width:80px;background:#ff3a6e"><span id="t67" class="tx " style="letter-spacing:-0.115px;">Cancelled</span></div><div class="badge" style="left:1222px;top:166px;height:27px;width:54px;background:#1eab65"><span id="t68" class="tx " style="letter-spacing:-0.277px;">Paid</span></div><div class="btn" style="left:1377px;top:164px;width:33px;height:31px;background:#3ec9d6"><svg class="ti" width="14" height="14" viewBox="0 0 24 24" fill="none" stroke="currentColor" stroke-width="2" stroke-linecap="round" stroke-linejoin="round" ><path d="M4 20h4l10.500 -10.500a2.828 2.828 0 1 0 -4 -4l-10.500 10.500v4"/><path d="M13.500 6.500l4 4"/></svg></div><div class="btn" style="left:1418px;top:165px;width:32px;height:31px;background:#ff3a6e"><svg class="ti" width="14" height="14" viewBox="0 0 24 24" fill="none" stroke="currentColor" stroke-width="2" stroke-linecap="round" stroke-linejoin="round" ><path d="M4 7h16"/><path d="M10 11v6"/><path d="M14 11v6"/><path d="M5 7l1 12a2 2 0 0 0 2 2h8a2 2 0 0 0 2 -2l1 -12"/><path d="M9 7v-3a1 1 0 0 1 1 -1h4a1 1 0 0 1 1 1v3"/></svg></div><div class="td" style="left:25.3px;top:223.0px"><span id="t69" class="tx " style="letter-spacing:0.000px;">4</span></div><div class="td" style="left:72.0px;top:223.0px"><span id="t70" class="tx " style="letter-spacing:0.152px;">William Clark</span></div><div class="td" style="left:200.8px;top:223.0px"><span id="t71" class="tx " style="letter-spacing:0.348px;">wawyc@mailinator.com</span></div><div class="td" style="left:401.8px;top:223.0px"><span id="t72" class="tx " style="letter-spacing:0.243px;">+911234567898</span></div><div class="td" style="left:538.0px;top:223.0px"><span id="t73" class="tx " style="letter-spacing:0.100px;">Ms. Priya Verma</span></div><div class="td" style="left:704.4px;top:223.0px"><span id="t74" class="tx " style="letter-spacing:0.143px;">11-03-2025 10:30 AM</span></div><div class="td" style="left:931.6px;top:223.0px"><span id="t75" class="tx " style="letter-spacing:-0.029px;">$1.899,0</span></div><div class="badge" style="left:1108px;top:219px;height:27px;width:83px;background:#1eab65"><span id="t76" class="tx " style="letter-spacing:-0.125px;">Scheduled</span></div><div class="badge" style="left:1222px;top:219px;height:27px;width:68px;background:#ff3a6e"><span id="t77" class="tx " style="letter-spacing:0.108px;">Unpaid</span></div><div class="btn" style="left:1377px;top:217px;width:33px;height:31px;background:#6fd943"><svg class="ti" width="14" height="14" viewBox="0 0 24 24" fill="none" stroke="currentColor" stroke-width="2" stroke-linecap="round" stroke-linejoin="round" ><circle cx="5" cy="18" r="2"/><circle cx="19" cy="6" r="2"/><path d="M19 8v5a5 5 0 0 1 -5 5h-3l3 -3m0 6l-3 -3"/><path d="M5 16v-5a5 5 0 0 1 5 -5h3l-3 -3m0 6l3 -3"/></svg></div><div class="btn" style="left:1418px;top:217px;width:32px;height:31px;background:#1c232f"><svg class="ti" width="14" height="14" viewBox="0 0 24 24" fill="none" stroke="currentColor" stroke-width="2.3" stroke-linecap="round" stroke-linejoin="round" ><path d="M12 5v14"/><path d="M5 12h14"/></svg></div><div class="btn" style="left:1459px;top:217px;width:32px;height:31px;background:#3ec9d6"><svg class="ti" width="14" height="14" viewBox="0 0 24 24" fill="none" stroke="currentColor" stroke-width="2" stroke-linecap="round" stroke-linejoin="round" ><path d="M4 20h4l10.500 -10.500a2.828 2.828 0 1 0 -4 -4l-10.500 10.500v4"/><path d="M13.500 6.500l4 4"/></svg></div><div class="btn" style="left:1499px;top:217px;width:32px;height:31px;background:#ff3a6e"><svg class="ti" width="14" height="14" viewBox="0 0 24 24" fill="none" stroke="currentColor" stroke-width="2" stroke-linecap="round" stroke-linejoin="round" ><path d="M4 7h16"/><path d="M10 11v6"/><path d="M14 11v6"/><path d="M5 7l1 12a2 2 0 0 0 2 2h8a2 2 0 0 0 2 -2l1 -12"/><path d="M9 7v-3a1 1 0 0 1 1 -1h4a1 1 0 0 1 1 1v3"/></svg></div></div><div class="abs" style="left:25px;top:425px;font-size:14px;line-height:20px;color:#293240"><span id="t78" class="tx " style="letter-spacing:0.278px;">Showing 1 to 4 of 4 entries</span></div>
<div class="abs" style="left:1465px;top:414px;width:35px;height:35px;border:1px solid #dfe3ea;border-radius:5px;background:#fff;color:#4a5a78;display:flex;align-items:center;justify-content:center"><svg class="ti" width="14" height="14" viewBox="0 0 24 24" fill="none" stroke="currentColor" stroke-width="2" stroke-linecap="round" stroke-linejoin="round" ><path d="M15 6l-6 6l6 6"/></svg></div>
<div class="abs" style="left:1505px;top:414px;width:35px;height:35px;border-radius:5px;background:#1eab65;color:#fff;font-size:14px;line-height:35px;text-align:center">1</div>
<div class="abs" style="left:1545px;top:414px;width:35px;height:35px;border:1px solid #dfe3ea;border-radius:5px;background:#fff;color:#4a5a78;display:flex;align-items:center;justify-content:center"><svg class="ti" width="14" height="14" viewBox="0 0 24 24" fill="none" stroke="currentColor" stroke-width="2" stroke-linecap="round" stroke-linejoin="round" ><path d="M9 6l6 6l-6 6"/></svg></div>
</main></body></html>
